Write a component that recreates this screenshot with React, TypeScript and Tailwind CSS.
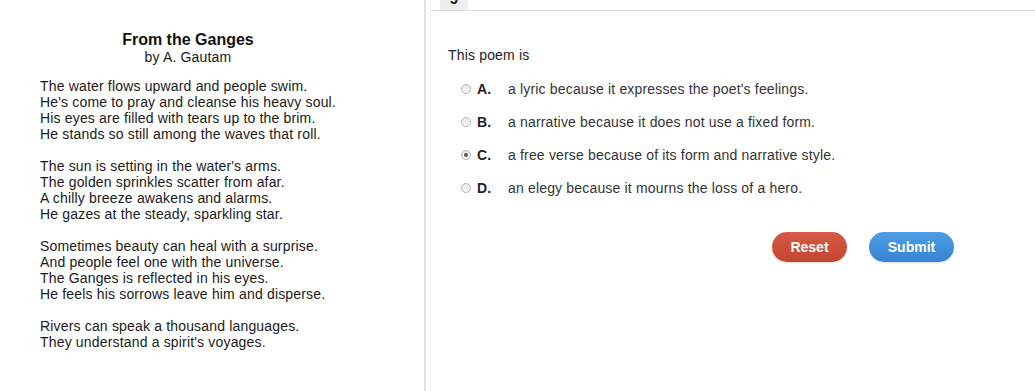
import React from "react";

const stanzas = [
  [
    "The water flows upward and people swim.",
    "He's come to pray and cleanse his heavy soul.",
    "His eyes are filled with tears up to the brim.",
    "He stands so still among the waves that roll.",
  ],
  [
    "The sun is setting in the water's arms.",
    "The golden sprinkles scatter from afar.",
    "A chilly breeze awakens and alarms.",
    "He gazes at the steady, sparkling star.",
  ],
  [
    "Sometimes beauty can heal with a surprise.",
    "And people feel one with the universe.",
    "The Ganges is reflected in his eyes.",
    "He feels his sorrows leave him and disperse.",
  ],
  [
    "Rivers can speak a thousand languages.",
    "They understand a spirit's voyages.",
  ],
];

const options = [
  { key: "A.", text: "a lyric because it expresses the poet's feelings." },
  { key: "B.", text: "a narrative because it does not use a fixed form." },
  { key: "C.", text: "a free verse because of its form and narrative style." },
  { key: "D.", text: "an elegy because it mourns the loss of a hero." },
];

function Radio({ checked }: { checked: boolean }) {
  return (
    <span className="w-[10px] h-[10px] rounded-full border border-[#b5b5b5] bg-gradient-to-b from-[#e6e6e6] to-[#fafafa] flex items-center justify-center">
      {checked && <span className="w-[4px] h-[4px] rounded-full bg-[#555]" />}
    </span>
  );
}

export default function App() {
  return (
    <main
      className="flex min-h-screen bg-white text-[14px] leading-[16px] tracking-[0.17px]"
      style={{ fontFamily: '"Liberation Sans", Arial, sans-serif' }}
    >
      {/* Poem */}
      <section className="w-[426px] shrink-0 border-r-2 border-[#e4e4e4] pl-[40px] pt-[31px]">
        <div className="inline-flex flex-col text-[#1a1a1a]">
          <h1 className="text-center text-[16px] leading-[18px] font-bold text-[#111] tracking-normal">From the Ganges</h1>
          <p className="text-center">by A. Gautam</p>
          <div className="mt-[13px] flex flex-col gap-[16px]">
            {stanzas.map((lines, i) => (
              <div key={i}>
                {lines.map((line) => (
                  <p key={line} className="whitespace-nowrap">{line}</p>
                ))}
              </div>
            ))}
          </div>
        </div>
      </section>

      {/* Question */}
      <section className="flex-1 ml-[4px] border-l border-[#f3f3f3]">
        <div className="h-[11px] border-b border-[#dcdcdc] pl-[9px]">
          <div className="w-[28px] h-[10px] bg-[#eeeeee] overflow-hidden flex justify-center">
            <span className="text-[16px] leading-[16px] font-bold text-[#222] -mt-[9px]">9</span>
          </div>
        </div>

        <p className="mt-[36px] pl-[17px] text-[#222]">This poem is</p>

        <div className="mt-[9px] flex flex-col">
          {options.map((o) => (
            <div key={o.key} className="h-[33px] flex items-center pl-[30px] text-[#333]">
              <Radio checked={o.key === "C."} />
              <span className="ml-[6px] w-[31px] font-bold text-[#222]">{o.key}</span>
              <span>{o.text}</span>
            </div>
          ))}
        </div>

        <div className="mt-[28px] pl-[341px] flex gap-[22px]">
          <button className="w-[75px] h-[30px] rounded-full bg-gradient-to-b from-[#d65a45] to-[#c2452f] text-white font-bold text-[14px] tracking-normal shadow-[0_1px_2px_rgba(0,0,0,0.15)]">
            Reset
          </button>
          <button className="w-[85px] h-[30px] rounded-full bg-gradient-to-b from-[#4d9ee4] to-[#3783d3] text-white font-bold text-[14px] tracking-normal shadow-[0_1px_2px_rgba(0,0,0,0.15)]">
            Submit
          </button>
        </div>
      </section>
    </main>
  );
}
